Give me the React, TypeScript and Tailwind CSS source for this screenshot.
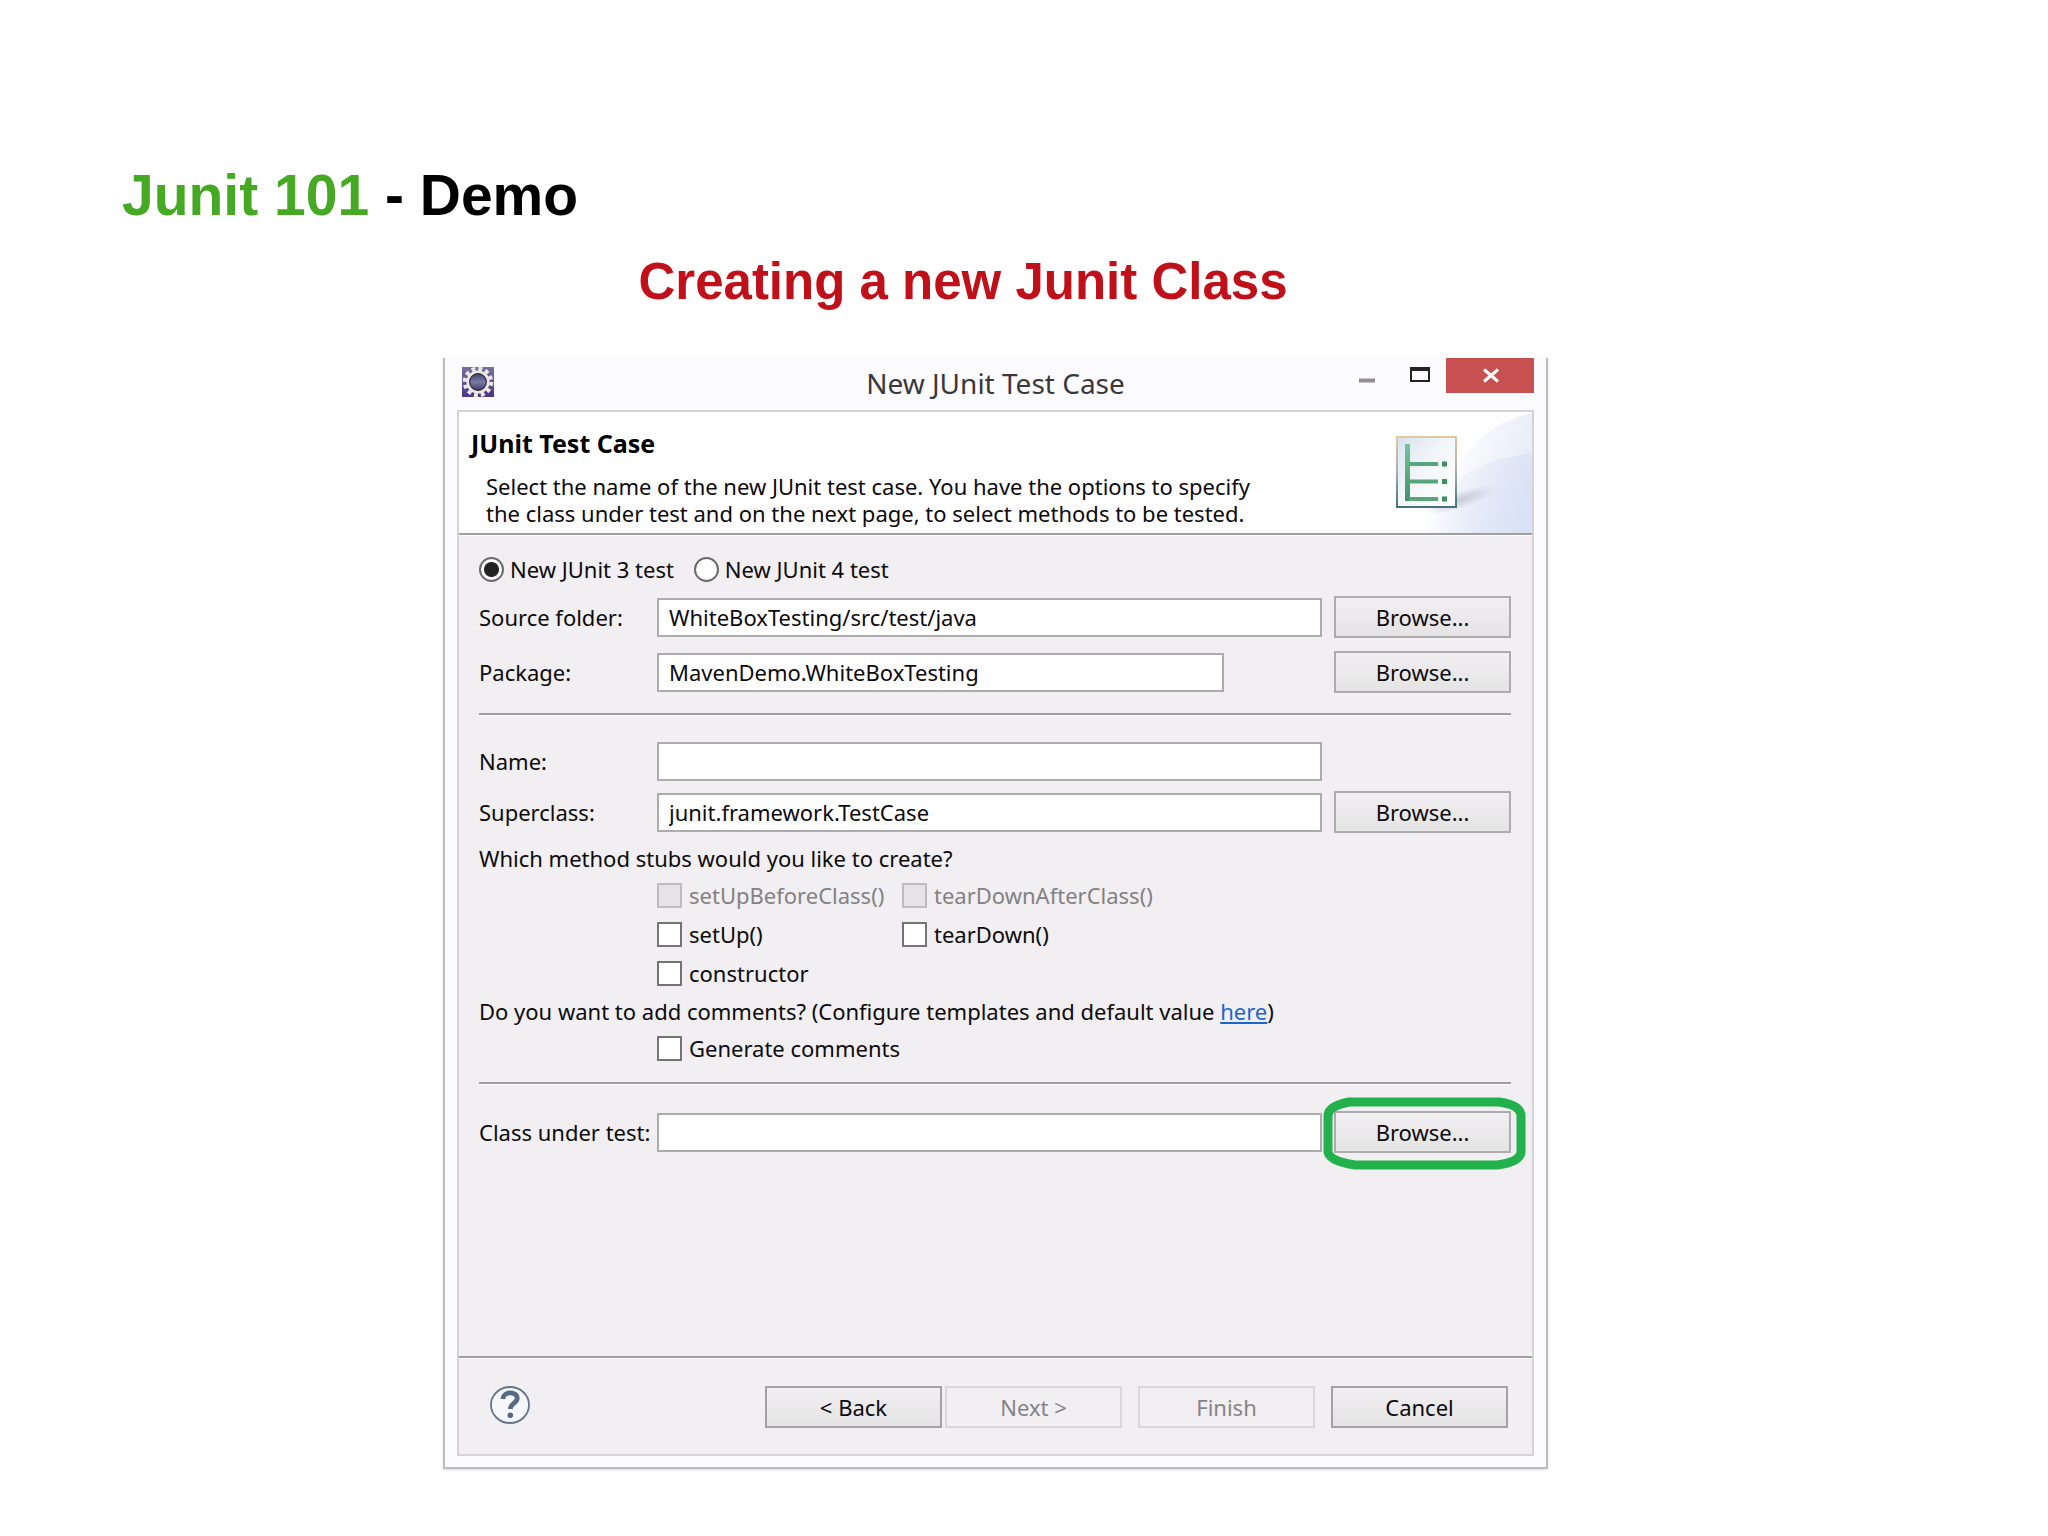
import { ReactNode } from 'react';

interface BrowseButtonProps {
  label: string;
  highlighted?: boolean;
}

interface TextRowProps {
  id: string;
  label: string;
  value?: string;
  inputClassName?: string;
  children?: ReactNode;
}

interface CheckOptionProps {
  id: string;
  label: string;
  disabled?: boolean;
}

interface RadioOptionProps {
  id: string;
  label: string;
  checked?: boolean;
}

interface FooterButtonProps {
  label: string;
  disabled?: boolean;
}

function BrowseButton({ label, highlighted }: BrowseButtonProps) {
  return (
    <div className="relative">
      <button
        type="button"
        aria-label={label}
        className="block w-full h-[42px] border-2 border-[#adabad] bg-linear-to-b from-[#f1eff1] to-[#e5e4e5] text-center"
      >
        Browse...
      </button>
      {highlighted && (
        <svg
          className="absolute -top-3.5 -left-[11px] w-[203px] h-[73px] pointer-events-none"
          viewBox="0 0 203 73"
          fill="none"
          stroke="#22b14c"
          strokeWidth={9}
        >
          <path d="M26 5H176Q198 8 198 19V55Q197 65 174 68H32Q5 64 5 54V18Q6 9 26 5Z" />
        </svg>
      )}
    </div>
  );
}

function TextRow({ id, label, value = '', inputClassName = '', children }: TextRowProps) {
  return (
    <div className="grid grid-cols-[166px_1fr_177px] gap-x-3 items-center h-[42px]">
      <label htmlFor={id} className="whitespace-nowrap">{label}</label>
      <div className={inputClassName}>
        <input
          id={id}
          type="text"
          defaultValue={value}
          className="block w-full h-[39px] px-2.5 border-2 border-[#adabad] bg-white outline-none"
        />
      </div>
      {children}
    </div>
  );
}

function CheckOption({ id, label, disabled }: CheckOptionProps) {
  return (
    <div className="flex items-center gap-[7px] h-7">
      <input
        id={id}
        type="checkbox"
        disabled={disabled}
        className="appearance-none size-[25px] border-2 border-[#757375] bg-white disabled:border-[#bebcbe] disabled:bg-[#e5e3e5]"
      />
      <label htmlFor={id} className={disabled ? 'text-[#838183]' : ''}>{label}</label>
    </div>
  );
}

function RadioOption({ id, label, checked }: RadioOptionProps) {
  return (
    <div className="flex items-center gap-[6px] h-7">
      <input
        id={id}
        type="radio"
        name="junit-version"
        defaultChecked={checked}
        className="appearance-none size-[25px] rounded-full border-2 border-[#6b696b] bg-white checked:bg-[radial-gradient(circle,#222_0,#222_7px,#fff_8px)]"
      />
      <label htmlFor={id}>{label}</label>
    </div>
  );
}

function FooterButton({ label, disabled }: FooterButtonProps) {
  return (
    <button
      type="button"
      disabled={disabled}
      className="w-[177px] h-[42px] border-2 border-[#a3a1a3] bg-linear-to-b from-[#f1eff1] to-[#e5e4e5] disabled:border-[#d9d7d9] disabled:from-[#f1eff1] disabled:to-[#f1eff1] disabled:text-[#858385]"
    >
      {label}
    </button>
  );
}

function Separator() {
  return <hr className="h-[3px] border-t-2 border-b border-t-[#a09ea0] border-b-white" />;
}

function GearIcon() {
  return (
    <svg className="w-8 h-[30px] ml-[5px]" viewBox="0 0 32 30">
      <defs>
        <linearGradient id="gear-bg" x1="0" y1="0" x2="0" y2="1">
          <stop offset="0" stopColor="#77719a" />
          <stop offset="1" stopColor="#4a3488" />
        </linearGradient>
        <linearGradient id="gear-core" x1="0" y1="0" x2="0" y2="1">
          <stop offset="0" stopColor="#3b3a5c" />
          <stop offset="0.5" stopColor="#7a7ba5" />
          <stop offset="1" stopColor="#33305c" />
        </linearGradient>
      </defs>
      <rect width="32" height="30" fill="url(#gear-bg)" />
      <circle cx="16" cy="15" r="13" fill="none" stroke="#ece9e4" strokeWidth="4.5" strokeDasharray="3.8 3.007" />
      <circle cx="16" cy="15" r="10" fill="url(#gear-core)" stroke="#ece9e4" strokeWidth="3.2" />
      <circle cx="16" cy="15" r="8.3" fill="none" stroke="#2b2940" strokeWidth="1.2" />
    </svg>
  );
}

function BannerArt() {
  return (
    <svg className="w-[180px] h-[121px] shrink-0" viewBox="0 0 180 121">
      <defs>
        <linearGradient id="swoosh-back" gradientUnits="userSpaceOnUse" x1="95" y1="40" x2="180" y2="70">
          <stop offset="0" stopColor="#ffffff" />
          <stop offset="1" stopColor="#e4e9f6" />
        </linearGradient>
        <linearGradient id="swoosh-front" gradientUnits="userSpaceOnUse" x1="80" y1="60" x2="180" y2="90">
          <stop offset="0.1" stopColor="#dbe3f5" stopOpacity="0" />
          <stop offset="1" stopColor="#d9e2f5" />
        </linearGradient>
        <linearGradient id="card" x1="0" y1="0" x2="1" y2="1">
          <stop offset="0" stopColor="#d7e2ef" />
          <stop offset="0.45" stopColor="#f3f6f9" />
          <stop offset="1" stopColor="#ffffff" />
        </linearGradient>
        <linearGradient id="card-edge" x1="0" y1="0" x2="0" y2="1">
          <stop offset="0" stopColor="#e3c79d" />
          <stop offset="0.5" stopColor="#a5b0ac" />
          <stop offset="1" stopColor="#45737a" />
        </linearGradient>
        <linearGradient id="tree" x1="0" y1="0" x2="0" y2="1">
          <stop offset="0" stopColor="#79c39b" />
          <stop offset="1" stopColor="#3f9363" />
        </linearGradient>
        <radialGradient id="card-shadow">
          <stop offset="0" stopColor="#9da3b8" stopOpacity="0.5" />
          <stop offset="1" stopColor="#9da3b8" stopOpacity="0" />
        </radialGradient>
      </defs>
      <path d="M180 1C150 8 120 24 106 58C96 86 70 108 30 121H180Z" fill="url(#swoosh-back)" />
      <path d="M180 42C150 44 125 52 104 70C88 88 60 108 30 121H180Z" fill="url(#swoosh-front)" />
      <ellipse cx="108" cy="88" rx="38" ry="9" fill="url(#card-shadow)" transform="rotate(-18 108 88)" />
      <rect x="45" y="25" width="59" height="70" fill="url(#card)" stroke="url(#card-edge)" strokeWidth="2" />
      <rect x="53" y="32" width="5" height="57" fill="url(#tree)" />
      <path d="M57 52H86M57 69.5H86M57 87H86" stroke="#55a67a" strokeWidth="4" />
      <path d="M90 52H95M90 69.5H95M90 87H95" stroke="#3c9060" strokeWidth="5" />
    </svg>
  );
}

function HelpIcon() {
  return (
    <svg className="w-10 h-[38px]" viewBox="0 0 40 38">
      <ellipse cx="20" cy="19" rx="19" ry="18" fill="#f6f7fa" stroke="#66738a" strokeWidth="1.8" />
      <path d="M12.8 13C13.5 4.8 27.2 5 27.2 12.2C27.2 17.2 20.3 17 20.3 23" fill="none" stroke="#566a86" strokeWidth="4.8" />
      <circle cx="20.3" cy="29.3" r="2.8" fill="#566a86" />
    </svg>
  );
}

function TitleBar() {
  return (
    <div className="grid grid-cols-[1fr_auto_1fr] h-[52px]">
      <div className="pt-[9px]">
        <GearIcon />
      </div>
      <h2 className="pt-[7px] text-[28px] leading-9 text-[#3a383a]">New JUnit Test Case</h2>
      <div className="flex justify-end items-start">
        <button type="button" aria-label="Minimize" className="w-12 h-[35px]">
          <svg className="w-12 h-[35px]" viewBox="0 0 48 35">
            <rect x="11" y="20.5" width="16" height="4" fill="#8f8d8f" />
          </svg>
        </button>
        <button type="button" aria-label="Maximize" className="w-[50px] h-[35px]">
          <svg className="w-[50px] h-[35px]" viewBox="0 0 50 35">
            <path fillRule="evenodd" fill="#252325" d="M14 9H34V24H14ZM16 13V22H32V13Z" />
          </svg>
        </button>
        <button type="button" aria-label="Close" className="w-[88px] h-[35px] bg-[#c75050]">
          <svg className="w-[88px] h-[35px]" viewBox="0 0 88 35">
            <path d="M38 11.5L52 23.5M52 11.5L38 23.5" stroke="#fff" strokeWidth="3" />
          </svg>
        </button>
      </div>
    </div>
  );
}

export default function App() {
  return (
    <main className="min-h-screen bg-white pt-[163px] pb-[66px]">
      <h1 className="pl-[122px] font-['Liberation_Sans',Arial,sans-serif] text-[57px] leading-16 font-bold text-black">
        <span className="text-[#45a924]">Junit 101</span> - Demo
      </h1>
      <p className="mt-[23px] mr-[122px] text-center font-['Liberation_Sans',Arial,sans-serif] text-[51px] leading-16 font-bold text-[#c01019]">
        Creating a new Junit Class
      </p>

      <section className="mt-11 ml-[443px] mr-[500px] px-3 pb-[11px] border-x-2 border-b-2 border-[#bdbbbd] bg-[#fcfbfd] shadow-sm font-['Noto_Sans','Open_Sans',sans-serif] text-[22px] leading-7 text-[#0c0a0c]">
        <TitleBar />
        <div className="border-2 border-[#d5d3d5] bg-[#f1eff1]">
          <header className="flex justify-between bg-white">
            <div className="pt-[17px] pl-3">
              <h3 className="text-[25px] font-bold text-black">JUnit Test Case</h3>
              <p className="mt-4 pl-[15px] leading-[27px] whitespace-nowrap">
                Select the name of the new JUnit test case. You have the options to specify
                <br />
                the class under test and on the next page, to select methods to be tested.
              </p>
            </div>
            <BannerArt />
          </header>
          <Separator />

          <form className="pt-[19px] pl-5 pr-[21px] pb-[203px]">
            <div className="flex gap-5">
              <RadioOption id="junit3" label="New JUnit 3 test" checked />
              <RadioOption id="junit4" label="New JUnit 4 test" />
            </div>
            <div className="mt-[13px] mb-5 flex flex-col gap-[13px]">
              <TextRow id="source-folder" label="Source folder:" value="WhiteBoxTesting/src/test/java">
                <BrowseButton label="Browse source folder" />
              </TextRow>
              <TextRow id="package" label="Package:" value="MavenDemo.WhiteBoxTesting" inputClassName="pr-[98px]">
                <BrowseButton label="Browse package" />
              </TextRow>
            </div>
            <Separator />
            <div className="mt-6 flex flex-col gap-[9px]">
              <TextRow id="name" label="Name:" />
              <TextRow id="superclass" label="Superclass:" value="junit.framework.TestCase">
                <BrowseButton label="Browse superclass" />
              </TextRow>
            </div>

            <p className="mt-[11px]">Which method stubs would you like to create?</p>
            <div className="mt-[9px] pl-[178px] grid grid-cols-[245px_1fr] gap-y-[11px]">
              <CheckOption id="set-up-before" label="setUpBeforeClass()" disabled />
              <CheckOption id="tear-down-after" label="tearDownAfterClass()" disabled />
              <CheckOption id="set-up" label="setUp()" />
              <CheckOption id="tear-down" label="tearDown()" />
              <CheckOption id="constructor" label="constructor" />
            </div>

            <p className="mt-2.5">
              Do you want to add comments? (Configure templates and default value{' '}
              <a href="#templates" className="text-[#1a66cc] underline">here</a>)
            </p>
            <div className="mt-[9px] mb-5 pl-[178px]">
              <CheckOption id="generate-comments" label="Generate comments" />
            </div>
            <Separator />
            <div className="mt-[26px]">
              <TextRow id="class-under-test" label="Class under test:">
                <BrowseButton label="Browse class under test" highlighted />
              </TextRow>
            </div>
          </form>

          <Separator />
          <footer className="flex items-start justify-between pt-[27px] pb-[26px] pl-[31px] pr-6">
            <button type="button" aria-label="Help">
              <HelpIcon />
            </button>
            <div className="flex gap-4">
              <div className="flex gap-[3px]">
                <FooterButton label="< Back" />
                <FooterButton label="Next >" disabled />
              </div>
              <FooterButton label="Finish" disabled />
              <FooterButton label="Cancel" />
            </div>
          </footer>
        </div>
      </section>
    </main>
  );
}
